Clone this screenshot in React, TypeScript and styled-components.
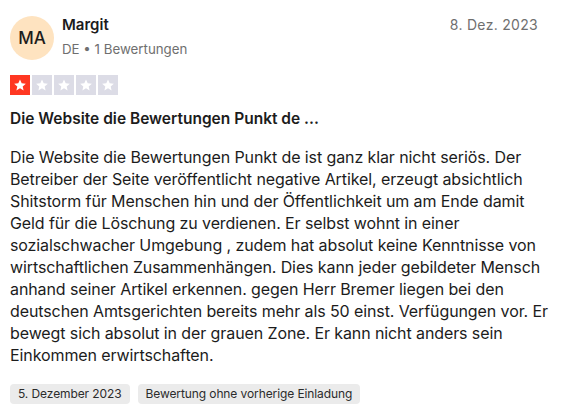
import React from 'react';
import styled, { createGlobalStyle } from 'styled-components';

const GlobalStyle = createGlobalStyle`
  html, body {
    margin: 0;
    padding: 0;
    background: #fff;
  }
  body {
    font-family: Inter, 'Liberation Sans', sans-serif;
    color: #1c1c1c;
  }
`;

const review = {
  initials: 'MA',
  name: 'Margit',
  country: 'DE',
  reviews: '1 Bewertungen',
  published: '8. Dez. 2023',
  rating: 1,
  title: 'Die Website die Bewertungen Punkt de ...',
  body:
    'Die Website die Bewertungen Punkt de ist ganz klar nicht seriös. Der Betreiber der Seite veröffentlicht negative Artikel, erzeugt absichtlich Shitstorm für Menschen hin und der Öffentlichkeit um am Ende damit Geld für die Löschung zu verdienen. Er selbst wohnt in einer sozialschwacher Umgebung , zudem hat absolut keine Kenntnisse von wirtschaftlichen Zusammenhängen. Dies kann jeder gebildeter Mensch anhand seiner Artikel erkennen. gegen Herr Bremer liegen bei den deutschen Amtsgerichten bereits mehr als 50 einst. Verfügungen vor. Er bewegt sich absolut in der grauen Zone. Er kann nicht anders sein Einkommen erwirtschaften.',
  experienced: '5. Dezember 2023',
  source: 'Bewertung ohne vorherige Einladung',
};

const Star = () => (
  <svg width="14" height="14" viewBox="0 0 24 24" fill="#fff">
    <path d="M12 2.5l2.9 6.6 7.1.6-5.4 4.7 1.6 7-6.2-3.7-6.2 3.7 1.6-7L2 9.7l7.1-.6z" />
  </svg>
);

const App = () => {
  return (
    <>
      <GlobalStyle />
      <Card>
        <Header>
          <Avatar>{review.initials}</Avatar>
          <Consumer>
            <Name>{review.name}</Name>
            <Meta>
              {review.country} • {review.reviews}
            </Meta>
          </Consumer>
          <PublishDate>{review.published}</PublishDate>
        </Header>

        <Stars>
          {[1, 2, 3, 4, 5].map((n) => (
            <StarBox key={n} $filled={n <= review.rating}>
              <Star />
            </StarBox>
          ))}
        </Stars>

        <Title>{review.title}</Title>
        <Body>{review.body}</Body>

        <Tags>
          <Tag>{review.experienced}</Tag>
          <Tag>{review.source}</Tag>
        </Tags>
      </Card>
    </>
  );
};

export default App;

const Card = styled.div`
  width: 567px;
  box-sizing: border-box;
  padding: 6px 8px 0 10px;
`;

const Header = styled.div`
  display: flex;
  align-items: flex-start;
  gap: 8px;
  padding-right: 21px;
`;

const Avatar = styled.div`
  width: 44px;
  height: 44px;
  margin-top: 10px;
  border-radius: 50%;
  background-color: #fee3c0;
  color: #1c1c1c;
  display: flex;
  align-items: center;
  justify-content: center;
  font-size: 17px;
  font-weight: 500;
`;

const Consumer = styled.div`
  flex: 1;
  display: flex;
  flex-direction: column;
  gap: 4px;
  padding-top: 9px;
`;

const Name = styled.div`
  font-size: 15px;
  font-weight: 600;
  line-height: 20px;
`;

const Meta = styled.div`
  font-size: 13.3px;
  line-height: 20px;
  color: #6f6f6f;
`;

const PublishDate = styled.div`
  padding-top: 9px;
  font-size: 14px;
  line-height: 20px;
  color: #6f6f6f;
  letter-spacing: 0.3px;
`;

const Stars = styled.div`
  display: flex;
  gap: 2px;
  margin-top: 15px;
`;

const StarBox = styled.div<{ $filled: boolean }>`
  width: 20px;
  height: 20px;
  display: flex;
  align-items: center;
  justify-content: center;
  background-color: ${({ $filled }) => ($filled ? '#ff3722' : '#dcdce6')};
`;

const Title = styled.h2`
  margin: 13px 0 0;
  font-size: 15.5px;
  font-weight: 600;
  line-height: 22px;
`;

const Body = styled.p`
  margin: 16px 0 0;
  font-size: 16px;
  line-height: 22px;
  letter-spacing: -0.1px;
`;

const Tags = styled.div`
  display: flex;
  gap: 8px;
  margin-top: 18px;
`;

const Tag = styled.span`
  background-color: #ebebeb;
  border-radius: 4px;
  padding: 0 8px;
  font-size: 12px;
  letter-spacing: -0.1px;
  line-height: 20px;
  color: #2c2c2c;
`;
